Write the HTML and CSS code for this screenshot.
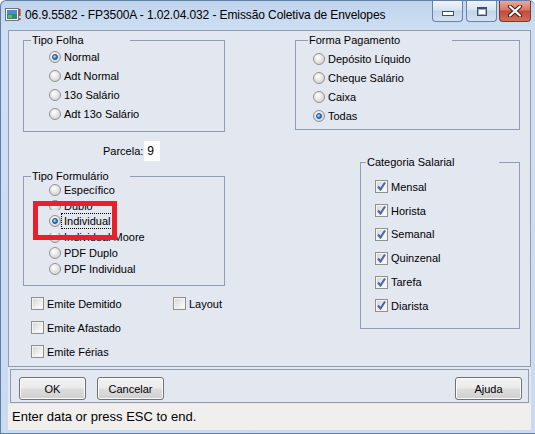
FILE: index.html
```html
<!DOCTYPE html>
<html lang="pt-BR">
<head>
  <meta charset="UTF-8" />
  <title>Emissão Coletiva de Envelopes</title>
  <link rel="stylesheet" href="styles.css">
</head>
<body>

<div class="window">
  <div class="titlebar">
    <svg class="app-icon" width="16" height="16" viewBox="0 0 16 16">
      <rect x="0.5" y="1.5" width="13" height="12" fill="#f4f6f8" stroke="#6b7580"/>
      <rect x="2" y="3" width="10" height="9" fill="#2f8a7c"/>
      <rect x="2" y="3" width="10" height="4" fill="#4d8fc4"/>
      <rect x="3" y="8" width="4" height="3" fill="#6bb36a"/>
      <rect x="14" y="2" width="1.6" height="7" fill="#d83a2a"/>
      <rect x="14" y="11" width="1.6" height="2" fill="#d83a2a"/>
    </svg>
    <span class="title">06.9.5582 - FP3500A - 1.02.04.032 - Emissão Coletiva de Envelopes</span>
    <div class="caption">
      <button class="cap minimize"><span class="glyph"></span></button>
      <button class="cap maximize"><span class="glyph"></span></button>
      <button class="cap close">
        <svg width="16" height="12" viewBox="0 0 16 12">
          <path d="M3 1.5 L13 10.5 M13 1.5 L3 10.5" stroke="#4a1c14" stroke-width="4.2" stroke-linecap="round"/>
          <path d="M3 1.5 L13 10.5 M13 1.5 L3 10.5" stroke="#ffffff" stroke-width="2.2" stroke-linecap="round"/>
        </svg>
      </button>
    </div>
  </div>

  <div class="client">
    <div class="panel">
      <div class="col-left">
        <fieldset class="group folha">
          <legend>Tipo Folha</legend>
          <div class="opt"><span class="radio on"></span>Normal</div>
          <div class="opt"><span class="radio"></span>Adt Normal</div>
          <div class="opt"><span class="radio"></span>13o Salário</div>
          <div class="opt"><span class="radio"></span>Adt 13o Salário</div>
        </fieldset>

        <div class="parcela">
          <label for="parcela">Parcela:</label>
          <input id="parcela" type="text" value="9" />
        </div>

        <fieldset class="group formulario">
          <legend>Tipo Formulário</legend>
          <div class="opt"><span class="radio"></span>Específico</div>
          <div class="opt"><span class="radio"></span>Duplo</div>
          <div class="opt active"><span class="radio on"></span><span class="focus">Individual</span></div>
          <div class="opt"><span class="radio"></span>Individual Moore</div>
          <div class="opt"><span class="radio"></span>PDF Duplo</div>
          <div class="opt"><span class="radio"></span>PDF Individual</div>
          <div class="marker"></div>
        </fieldset>

        <div class="flags">
          <div class="opt"><span class="check"></span>Emite Demitido</div>
          <div class="opt"><span class="check"></span>Layout</div>
          <div class="opt"><span class="check"></span>Emite Afastado</div>
          <div></div>
          <div class="opt"><span class="check"></span>Emite Férias</div>
        </div>
      </div>

      <div class="col-right">
        <fieldset class="group pagamento">
          <legend>Forma Pagamento</legend>
          <div class="opt"><span class="radio"></span>Depósito Líquido</div>
          <div class="opt"><span class="radio"></span>Cheque Salário</div>
          <div class="opt"><span class="radio"></span>Caixa</div>
          <div class="opt"><span class="radio on"></span>Todas</div>
        </fieldset>

        <fieldset class="group categoria">
          <legend>Categoria Salarial</legend>
          <div class="opt"><span class="check on"></span>Mensal</div>
          <div class="opt"><span class="check on"></span>Horista</div>
          <div class="opt"><span class="check on"></span>Semanal</div>
          <div class="opt"><span class="check on"></span>Quinzenal</div>
          <div class="opt"><span class="check on"></span>Tarefa</div>
          <div class="opt"><span class="check on"></span>Diarista</div>
        </fieldset>
      </div>
    </div>

    <div class="actions">
      <button class="button">OK</button>
      <button class="button">Cancelar</button>
      <button class="button help">Ajuda</button>
    </div>

    <div class="statusbar">Enter data or press ESC to end.</div>
  </div>
</div>

</body>
</html>
```

FILE: styles.css
```css
:root {
  --moldura: #c9dbf0;
  --fundo: #e3e7f0;
  --linha: #8f9cb1;
  --texto: #000;
}

body {
  margin: 0;
  background: #fff;
  font-family: "Liberation Sans", Arial, sans-serif;
  font-size: 11px;
  color: var(--texto);
  overflow: hidden;
}

.window {
  width: 535px;
  height: 434px;
  box-sizing: border-box;
  background: linear-gradient(#c0d4ec, #cddff2 30px, var(--moldura));
  border: 1px solid #5f7fa6;
  border-right: none;
  border-radius: 6px 6px 0 0;
  display: flex;
  flex-direction: column;
}

/* barra de titulo */
.titlebar {
  flex: none;
  height: 29px;
  display: flex;
  align-items: flex-start;
  padding-left: 4px;
}

.app-icon {
  margin-top: 6px;
}

.title {
  margin-top: 7px;
  margin-left: 4px;
  font-size: 12px;
  letter-spacing: -0.1px;
  white-space: nowrap;
}

.caption {
  margin-left: auto;
  display: flex;
  gap: 3px;
  padding-right: 4px;
}

.cap {
  width: 31px;
  height: 21px;
  padding: 0;
  border: 1px solid #6883a8;
  border-top: none;
  border-radius: 0 0 4px 4px;
  background: linear-gradient(#eef3fa, #d7e3f2 45%, #c2d4ea 50%, #d3e1f2);
  display: flex;
  align-items: center;
  justify-content: center;
}

.minimize .glyph {
  width: 10px;
  height: 3px;
  margin-top: 5px;
  background: #fff;
  border: 1px solid #3b4f6b;
}

.maximize .glyph {
  width: 8px;
  height: 6px;
  background: #fff;
  border: 1px solid #3b4f6b;
  border-top-width: 2px;
  box-shadow: inset 0 0 0 1px #9fb1c8;
}

.close {
  width: 32px;
  margin-left: -1px;
  border-color: #7a3a30;
  background: linear-gradient(#e8a89a, #d5776a 45%, #c24a36 50%, #d0705a);
}

/* area cliente */
.client {
  flex: none;
  height: 400px;
  display: flex;
  flex-direction: column;
  margin: 0 4px 0 7px;
  background: var(--fundo);
}

.panel {
  flex: none;
  height: 337px;
  box-sizing: border-box;
  border: 1px solid var(--linha);
  padding: 3px 10px 0 14px;
  display: flex;
  justify-content: space-between;
}

.col-left {
  width: 202px;
  display: flex;
  flex-direction: column;
}

.col-right {
  width: 225px;
  display: flex;
  flex-direction: column;
  align-items: flex-end;
}

.group {
  margin: 0;
  padding: 0;
  min-inline-size: 0;
  border: 1px solid var(--linha);
  box-sizing: border-box;
}

.group legend {
  padding: 0 0 0 1px;
  margin-left: 7px;
  line-height: 13px;
  height: 13px;
  box-sizing: border-box;
}

.opt {
  display: flex;
  align-items: center;
  gap: 3px;
  white-space: nowrap;
}

.folha {
  width: 202px;
  padding-bottom: 8px;
}

.folha legend,
.formulario legend {
  width: 99px;
}

.folha .opt {
  height: 19px;
  padding-left: 25px;
}

.parcela {
  display: flex;
  align-items: center;
  margin-top: 9px;
  padding-left: 80px;
  height: 20px;
}

.parcela input {
  width: 16px;
  height: 20px;
  margin-left: 1px;
  padding: 0 0 0 3px;
  box-sizing: border-box;
  border: none;
  background: #fff;
  font: 12px "Liberation Sans", Arial, sans-serif;
}

.formulario {
  position: relative;
  width: 202px;
  margin-top: 9px;
  padding-bottom: 8px;
}

.formulario .opt {
  height: 15.8px;
  padding-left: 25px;
}

.formulario .opt:first-of-type {
  margin-top: -1px;
}

/* opcao em foco fica por cima das vizinhas */
.formulario .active {
  position: relative;
  z-index: 1;
  margin: -4px 0 -4px;
  padding-top: 4px;
  padding-bottom: 4px;
  background: var(--fundo);
}

.focus {
  outline: 1px dotted #000;
  outline-offset: 1px;
  padding: 0 1px;
  margin-left: -1px;
}

.marker {
  position: absolute;
  left: 9px;
  top: 18px;
  width: 84px;
  height: 39px;
  box-sizing: border-box;
  border: 5px solid #e8202a;
  z-index: 2;
}

.flags {
  margin-top: 6px;
  padding-left: 8px;
  display: grid;
  grid-template-columns: 142px auto;
}

.flags .opt {
  height: 24px;
}

.pagamento {
  width: 225px;
  padding: 2px 0 4px 0;
}

.pagamento legend {
  margin-left: 12px;
  width: 144px;
}

.pagamento .opt {
  height: 19px;
  padding-left: 17px;
}

.categoria {
  width: 160px;
  margin-top: 26px;
  padding: 6px 0 10px 0;
}

.categoria legend {
  margin-left: 5px;
  width: 133px;
}

.categoria .opt {
  height: 23.8px;
  padding-left: 14px;
}

/* radio e checkbox no estilo do windows */
.radio {
  width: 12px;
  height: 12px;
  flex: none;
  box-sizing: border-box;
  border-radius: 50%;
  border: 1px solid #8f9194;
  background: radial-gradient(circle at 40% 35%, #ffffff, #e6e6e6 45%, #c9c9c9 100%);
  display: flex;
  align-items: center;
  justify-content: center;
}

.radio.on::after {
  content: "";
  width: 6px;
  height: 6px;
  border-radius: 50%;
  box-sizing: border-box;
  border: 1px solid #174a86;
  background: radial-gradient(circle at 35% 35%, #c4ecff, #3b93e0 50%, #12508f);
}

.check {
  width: 13px;
  height: 13px;
  flex: none;
  box-sizing: border-box;
  border: 1px solid #8e8f8f;
  background: linear-gradient(135deg, #d2d2d2, #f4f4f4 70%, #fbfbfb);
  box-shadow: inset 0 0 0 1px #f4f4f4;
}

.check.on {
  background:
    url("data:image/svg+xml,%3Csvg xmlns='http://www.w3.org/2000/svg' width='11' height='11'%3E%3Cpath d='M2 5.5 L4.5 8.5 L9 1.5' fill='none' stroke='%234a62a8' stroke-width='2'/%3E%3C/svg%3E") center / 11px 11px no-repeat,
    linear-gradient(135deg, #d2d2d2, #f4f4f4 70%, #fbfbfb);
}

/* botoes */
.actions {
  flex: none;
  height: 34px;
  margin: 2px 2px 0 2px;
  box-sizing: border-box;
  border: 1px solid var(--linha);
  padding: 7px 6px 0 8px;
  display: flex;
  align-items: flex-start;
  gap: 11px;
}

.button {
  width: 67px;
  height: 23px;
  padding: 0;
  border: 1px solid #707070;
  border-radius: 3px;
  background: linear-gradient(#f2f2f2, #ebebeb 48%, #dddddd 52%, #cfcfcf);
  box-shadow: inset 0 0 0 1px #fbfbfb;
  font: 11px "Liberation Sans", Arial, sans-serif;
  color: #000;
}

.help {
  margin-left: auto;
}

.statusbar {
  flex: none;
  margin-top: 1px;
  height: 26px;
  line-height: 26px;
  padding-left: 4px;
  background: #f0efed;
  font-size: 13px;
}
```
